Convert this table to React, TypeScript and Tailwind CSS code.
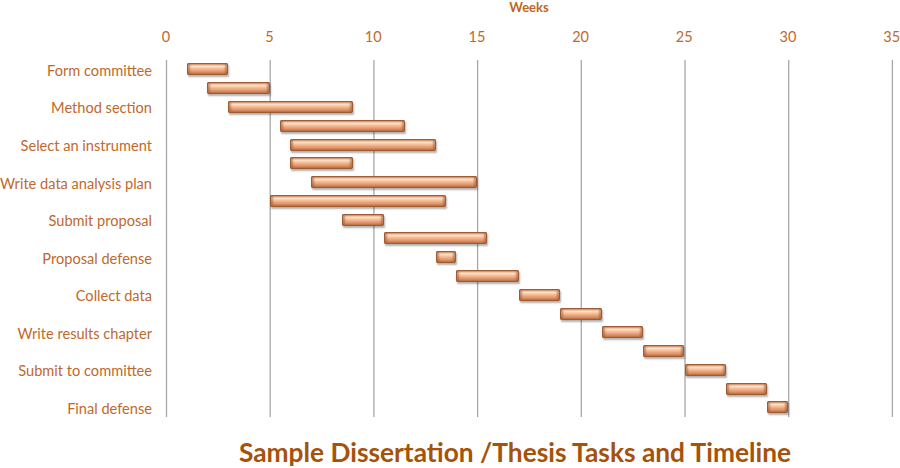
import React from "react";

const UNIT = 20.74;
const bars: [number, number][] = [
  [1, 3],
  [2, 5],
  [3, 9],
  [5.5, 11.5],
  [6, 13],
  [6, 9],
  [7, 15],
  [5, 13.5],
  [8.5, 10.5],
  [10.5, 15.5],
  [13, 14],
  [14, 17],
  [17, 19],
  [19, 21],
  [21, 23],
  [23, 25],
  [25, 27],
  [27, 29],
  [29, 30],
];
const labels: Record<number, string> = {
  0: "Form committee",
  2: "Method section",
  4: "Select an instrument",
  6: "Write data analysis plan",
  8: "Submit proposal",
  10: "Proposal defense",
  12: "Collect data",
  14: "Write results chapter",
  16: "Submit to committee",
  18: "Final defense",
};
const ticks = [0, 5, 10, 15, 20, 25, 30, 35];

export default function App() {
  return (
    <div className="w-[900px] h-[468px] bg-white overflow-hidden font-['Lato','Liberation_Sans',sans-serif] text-[#c0692c]">
      <div className="h-[15px] flex">
        <div className="w-[166px] shrink-0" />
        <div className="w-[726px] text-center text-[13px] leading-[15px] font-bold text-[#c0661e]">
          Weeks
        </div>
      </div>
      <div className="h-[45px] flex items-center">
        <div className="w-[114px] shrink-0" />
        <div className="flex shrink-0 pb-[1px]">
          {ticks.map((t) => (
            <div key={t} className="w-[103.7px] shrink-0 text-center text-[14.5px] leading-[18px]">
              {t}
            </div>
          ))}
        </div>
      </div>
      <div className="flex">
        <div className="w-[166px] shrink-0 grid grid-rows-[repeat(19,18.79px)]">
          {bars.map((_, i) => (
            <div key={i} className="flex items-center justify-end pr-[14px] pt-[3px] text-[14.6px] leading-[16px] whitespace-nowrap">
              {labels[i] ?? ""}
            </div>
          ))}
        </div>
        <div className="relative w-[728px] shrink-0 grid grid-rows-[repeat(19,18.79px)]">
          <svg className="absolute inset-0 overflow-visible" width="728" height="357">
            {ticks.map((t) => (
              <line
                key={t}
                x1={t * UNIT + 0.5}
                x2={t * UNIT + 0.5}
                y1={0}
                y2={357}
                stroke="#a8a8a8"
                strokeWidth={1.3}
              />
            ))}
          </svg>
          {bars.map(([s, e], i) => (
            <div key={i} className="relative flex items-center">
              <div
                className="h-[12px] border border-[#9e5c33] rounded-[1px] bg-[linear-gradient(to_bottom,#e9a47a_0%,#fde3cc_22%,#f4bf9a_45%,#e59c70_70%,#c97e52_100%)] shadow-[1px_2px_2px_rgba(0,0,0,0.3),inset_2px_0_2px_rgba(160,85,45,0.55),inset_-2px_0_2px_rgba(160,85,45,0.55)]"
                style={{ marginLeft: s * UNIT, width: (e - s) * UNIT }}
              />
            </div>
          ))}
        </div>
      </div>
      <div className="flex justify-center pt-[19px] pl-[130px]">
        <div className="text-[26.3px] leading-[32px] font-bold text-[#a5520b] whitespace-nowrap">
          Sample Dissertation /Thesis Tasks and Timeline
        </div>
      </div>
    </div>
  );
}
